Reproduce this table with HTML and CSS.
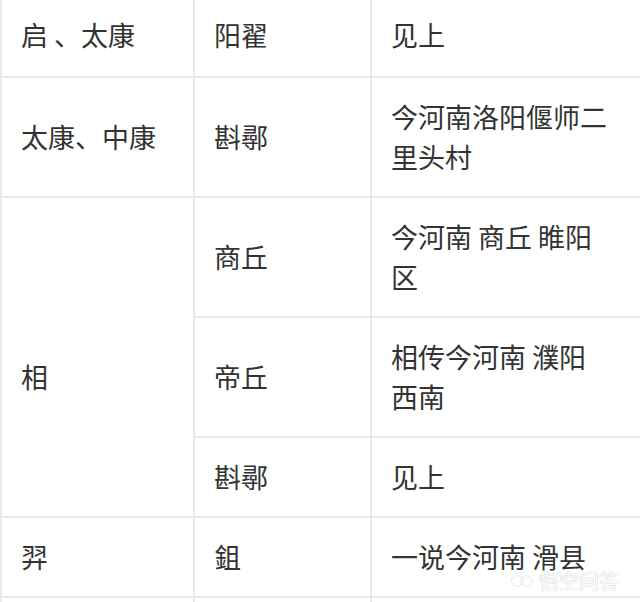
FILE: index.html
```html
<!DOCTYPE html>
<html lang="zh">
<head>
<meta charset="utf-8">
<link rel="stylesheet" href="styles.css">
</head>
<body>
<div class="page">
<table class="tbl">
<colgroup><col class="c1"><col class="c2"><col class="c3"></colgroup>
<tr class="first"><td>启 、太康</td><td>阳翟</td><td>见上</td></tr>
<tr><td>太康、中康</td><td>斟鄩</td><td>今河南洛阳偃师二<br>里头村</td></tr>
<tr><td rowspan="3" class="span">相</td><td>商丘</td><td>今河南 商丘 睢阳<br>区</td></tr>
<tr><td>帝丘</td><td>相传今河南 濮阳<br>西南</td></tr>
<tr><td>斟鄩</td><td>见上</td></tr>
<tr><td>羿</td><td>鉏</td><td>一说今河南 滑县</td></tr>
<tr><td>&nbsp;</td><td>&nbsp;</td><td>&nbsp;</td></tr>
</table>
<div class="mark">
<svg class="mark-icon" width="24" height="16" viewBox="0 0 26 16"><ellipse cx="8" cy="8" rx="6.5" ry="5.5" fill="none" stroke="#fff" stroke-width="2.4"/><ellipse cx="18" cy="8" rx="6.5" ry="5.5" fill="none" stroke="#fff" stroke-width="2.4"/><ellipse cx="8" cy="8" rx="6.5" ry="5.5" fill="none" stroke="#d6d6d6" stroke-width="0.6"/><ellipse cx="18" cy="8" rx="6.5" ry="5.5" fill="none" stroke="#d6d6d6" stroke-width="0.6"/></svg>
<span class="mark-text">悟空问答</span>
</div>
</div>
</body>
</html>
```
FILE: styles.css
```css
html, body {
  margin: 0;
  padding: 0;
  background: #fff;
  overflow: hidden;
}
.page {
  position: relative;
  width: 640px;
  height: 602px;
  overflow: hidden;
}
.tbl {
  border-collapse: collapse;
  table-layout: fixed;
  width: 642px;
  font-family: "Noto Sans CJK SC", "Noto Sans", sans-serif;
  font-size: 27px;
  line-height: 40px;
  color: #333;
}
.c1 { width: 193px; }
.c2 { width: 177px; }
.c3 { width: 272px; }
.tbl td {
  border: 2px solid #e8e8e8;
  padding: 19px 19px;
  vertical-align: middle;
  text-align: left;
  white-space: nowrap;
}
.tbl .first td {
  border-top: none;
  padding-top: 15px;
  padding-bottom: 21px;
}
.tbl td.span {
  padding-top: 60px;
  padding-bottom: 20px;
}
.mark {
  position: absolute;
  left: 510px;
  top: 571px;
  display: flex;
  align-items: center;
  gap: 5px;
}
.mark-text {
  font-family: "Noto Sans CJK SC", sans-serif;
  font-size: 20px;
  line-height: 20px;
  color: #fff;
  text-shadow: 0 0 1px #c8c8c8, 0 0 1px #c8c8c8;
}
```
